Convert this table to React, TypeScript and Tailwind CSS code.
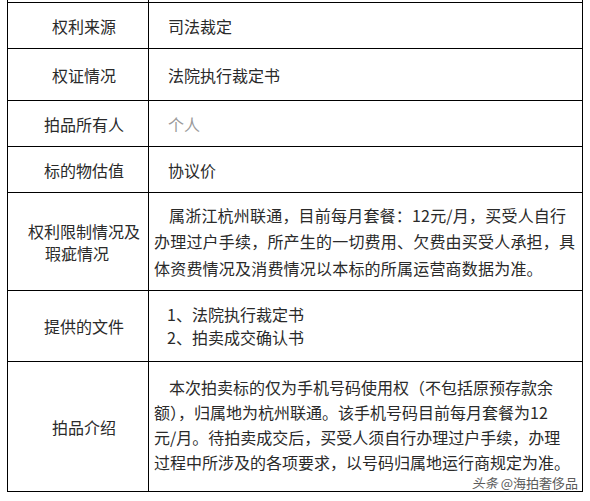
const font = { fontFamily: '"Noto Sans CJK SC", "Noto Sans", sans-serif' };

const Row = ({
  h,
  label,
  children,
  last,
}: {
  h: string;
  label: React.ReactNode;
  children: React.ReactNode;
  last?: boolean;
}) => (
  <div className={`grid grid-cols-[141px_1fr] border-t border-black ${last ? 'border-b' : ''} ${h}`}>
    <div className="flex items-center justify-center border-r border-black pl-[12px] text-center">
      {label}
    </div>
    <div className="relative flex items-center">{children}</div>
  </div>
);

export default function App() {
  return (
    <div className="min-h-screen bg-white text-[16px] text-[#2a2a2a]" style={font}>
      <div className="ml-[7px] w-[576px] border-x border-black">
        {/* table continues above the crop */}
        <div className="grid h-[2px] grid-cols-[141px_1fr]">
          <div className="border-r border-black" />
          <div />
        </div>

        <Row h="h-[46px]" label="权利来源">
          <span className="pl-[19px]">司法裁定</span>
        </Row>

        <Row h="h-[52px]" label="权证情况">
          <span className="pl-[19px]">法院执行裁定书</span>
        </Row>

        <Row h="h-[46px]" label="拍品所有人">
          <span className="pl-[19px] text-[#9a9a9a]">个人</span>
        </Row>

        <Row h="h-[46px]" label="标的物估值">
          <span className="pl-[19px]">协议价</span>
        </Row>

        <Row
          h="h-[98px]"
          label={
            <div className="leading-[22px]">
              <span className="block">权利限制情况及</span>
              <span className="block pl-[17px] text-left">瑕疵情况</span>
            </div>
          }
        >
          <p className="pl-[5px] leading-[26.5px] tracking-[0.2px]">
            <span className="pl-[15px]">属浙江杭州联通，目前每月套餐：12元/月，买受人自行</span>
            <br />
            办理过户手续，所产生的一切费用、欠费由买受人承担，具
            <br />
            体资费情况及消费情况以本标的所属运营商数据为准。
          </p>
        </Row>

        <Row h="h-[71px]" label="提供的文件">
          <div className="pl-[18px] leading-[23px]">
            <div>1、法院执行裁定书</div>
            <div>2、拍卖成交确认书</div>
          </div>
        </Row>

        <Row h="h-[131px]" label="拍品介绍" last>
          <p className="pl-[5px] pb-[4px] leading-[25px]">
            <span className="pl-[15px]">本次拍卖标的仅为手机号码使用权（不包括原预存款余</span>
            <br />
            额），归属地为杭州联通。该手机号码目前每月套餐为12
            <br />
            元/月。待拍卖成交后，买受人须自行办理过户手续，办理
            <br />
            过程中所涉及的各项要求，以号码归属地运行商规定为准。
          </p>
          <span className="absolute right-[4px] bottom-[1px] text-[13px] leading-[15px] text-[#5a5a5a] [text-shadow:0_0_2px_#fff]">
            <span className="italic">头条</span> @海拍奢侈品
          </span>
        </Row>
      </div>
    </div>
  );
}
